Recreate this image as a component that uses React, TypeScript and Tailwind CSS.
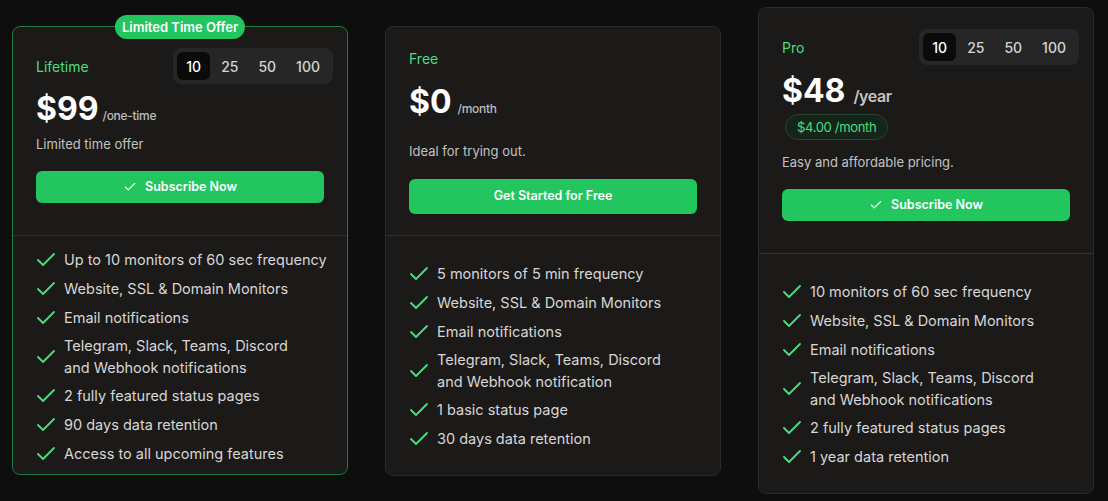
import { Check } from "lucide-react";

type Plan = {
  name: string;
  price: string;
  unit: string;
  desc: string;
  cta: string;
  features: string[];
};

const plans: Plan[] = [
  {
    name: "Lifetime",
    price: "$99",
    unit: "/one-time",
    desc: "Limited time offer",
    cta: "Subscribe Now",
    features: [
      "Up to 10 monitors of 60 sec frequency",
      "Website, SSL & Domain Monitors",
      "Email notifications",
      "Telegram, Slack, Teams, Discord\nand Webhook notifications",
      "2 fully featured status pages",
      "90 days data retention",
      "Access to all upcoming features",
    ],
  },
  {
    name: "Free",
    price: "$0",
    unit: "/month",
    desc: "Ideal for trying out.",
    cta: "Get Started for Free",
    features: [
      "5 monitors of 5 min frequency",
      "Website, SSL & Domain Monitors",
      "Email notifications",
      "Telegram, Slack, Teams, Discord\nand Webhook notification",
      "1 basic status page",
      "30 days data retention",
    ],
  },
  {
    name: "Pro",
    price: "$48",
    unit: "/year",
    desc: "Easy and affordable pricing.",
    cta: "Subscribe Now",
    features: [
      "10 monitors of 60 sec frequency",
      "Website, SSL & Domain Monitors",
      "Email notifications",
      "Telegram, Slack, Teams, Discord\nand Webhook notifications",
      "2 fully featured status pages",
      "1 year data retention",
    ],
  },
];

const MonitorToggle = () => (
  <div className="flex items-center gap-[2px] rounded-lg bg-[#262626] p-1 -mr-[9px]">
    {["10", "25", "50", "100"].map((n, i) => (
      <button
        key={n}
        className={`h-7 rounded-md px-[9px] text-[14px] font-medium ${
          i === 0 ? "bg-[#0a0a0a] text-white" : "text-[#d4d4d4]"
        }`}
      >
        {n}
      </button>
    ))}
  </div>
);

const FeatureList = ({ items, className }: { items: string[]; className: string }) => (
  <ul className={`flex flex-col gap-[5px] pl-[21px] pr-2 ${className}`}>
    {items.map((f, i) => (
      <li key={i} className="flex items-center gap-[6px] text-[14.5px] leading-[22px] text-[#d6d6d6]">
        <Check size={24} strokeWidth={1.8} className="shrink-0 text-[#4ade80]" />
        <span className="whitespace-pre-line">{f}</span>
      </li>
    ))}
  </ul>
);

const SubscribeButton = ({ label }: { label: string }) => (
  <button className="mt-[17px] flex h-8 w-full items-center justify-center gap-2 rounded-md bg-[#22c55e] text-[12.5px] font-semibold text-white">
    <Check size={14} strokeWidth={2} />
    {label}
  </button>
);

export default function App() {
  const [lifetime, free, pro] = plans;

  return (
    <div
      className="flex h-[501px] items-center bg-[#0e0e0e] pl-[12px] pr-[14px]"
      style={{ fontFamily: "Inter, 'Noto Sans', sans-serif" }}
    >
      <div className="grid w-full grid-cols-3 items-center gap-[37px]">
        {/* Lifetime */}
        <div className="relative rounded-lg border border-[#1f7a3d] bg-[#1c1a19]">
          <div className="absolute left-1/2 top-0 -translate-x-1/2 -translate-y-1/2 whitespace-nowrap rounded-full bg-[#22c55e] px-[7px] py-[3px] text-[13px] font-semibold leading-[18px] text-white">
            Limited Time Offer
          </div>
          <div className="px-[23px] pt-[21px] pb-[32px]">
            <div className="flex items-center justify-between">
              <span className="text-[14px] text-[#4ade80]">{lifetime.name}</span>
              <MonitorToggle />
            </div>
            <div className="mt-[7px] flex items-baseline">
              <span className="text-[32px] font-bold leading-[36px] text-white">{lifetime.price}</span>
              <span className="ml-1 text-[12px] font-medium tracking-tight text-[#bdbdbd]">{lifetime.unit}</span>
            </div>
            <p className="mt-[7px] text-[13px] leading-[20px] text-[#c2c2c2]">{lifetime.desc}</p>
            <SubscribeButton label={lifetime.cta} />
          </div>
          <div className="border-t border-[#333131]" />
          <FeatureList items={lifetime.features} className="pt-[12px] pb-[8px]" />
        </div>

        {/* Free */}
        <div className="rounded-lg border border-[#2c2a29] bg-[#1c1a19]">
          <div className="px-[23px] pt-[21px] pb-[21px]">
            <div className="text-[14px] leading-[22px] text-[#4ade80]">{free.name}</div>
            <div className="mt-[14px] flex items-baseline">
              <span className="text-[32px] font-bold leading-[36px] text-white">{free.price}</span>
              <span className="ml-[6px] text-[12px] font-medium tracking-tight text-[#bdbdbd]">{free.unit}</span>
            </div>
            <p className="mt-[21px] text-[13px] leading-[20px] text-[#c2c2c2]">{free.desc}</p>
            <button className="mt-[18px] flex h-[35px] w-full items-center justify-center rounded-md bg-[#22c55e] text-[12.5px] font-semibold text-white">
              {free.cta}
            </button>
          </div>
          <div className="border-t border-[#333131]" />
          <FeatureList items={free.features} className="pt-[26px] pb-[24px]" />
        </div>

        {/* Pro */}
        <div className="rounded-lg border border-[#2c2a29] bg-[#1c1a19]">
          <div className="px-[23px] pt-[21px] pb-[32px]">
            <div className="flex items-center justify-between">
              <span className="text-[14px] text-[#4ade80]">{pro.name}</span>
              <MonitorToggle />
            </div>
            <div className="mt-[8px] flex items-baseline">
              <span className="text-[32px] font-bold leading-[36px] text-white">{pro.price}</span>
              <span className="ml-2 text-[16px] font-semibold tracking-tight text-[#c4c4c4]">{pro.unit}</span>
            </div>
            <div className="mt-[5px] flex">
              <span className="ml-[3px] rounded-full border border-[#24462f] bg-[#15251a] px-[11px] py-[3px] text-[13px] leading-[18px] tracking-tight text-[#4ade80]">
                $4.00 /month
              </span>
            </div>
            <p className="mt-[12px] text-[13px] leading-[20px] text-[#c2c2c2]">{pro.desc}</p>
            <SubscribeButton label={pro.cta} />
          </div>
          <div className="border-t border-[#333131]" />
          <FeatureList items={pro.features} className="pt-[26px] pb-[24px]" />
        </div>
      </div>
    </div>
  );
}
